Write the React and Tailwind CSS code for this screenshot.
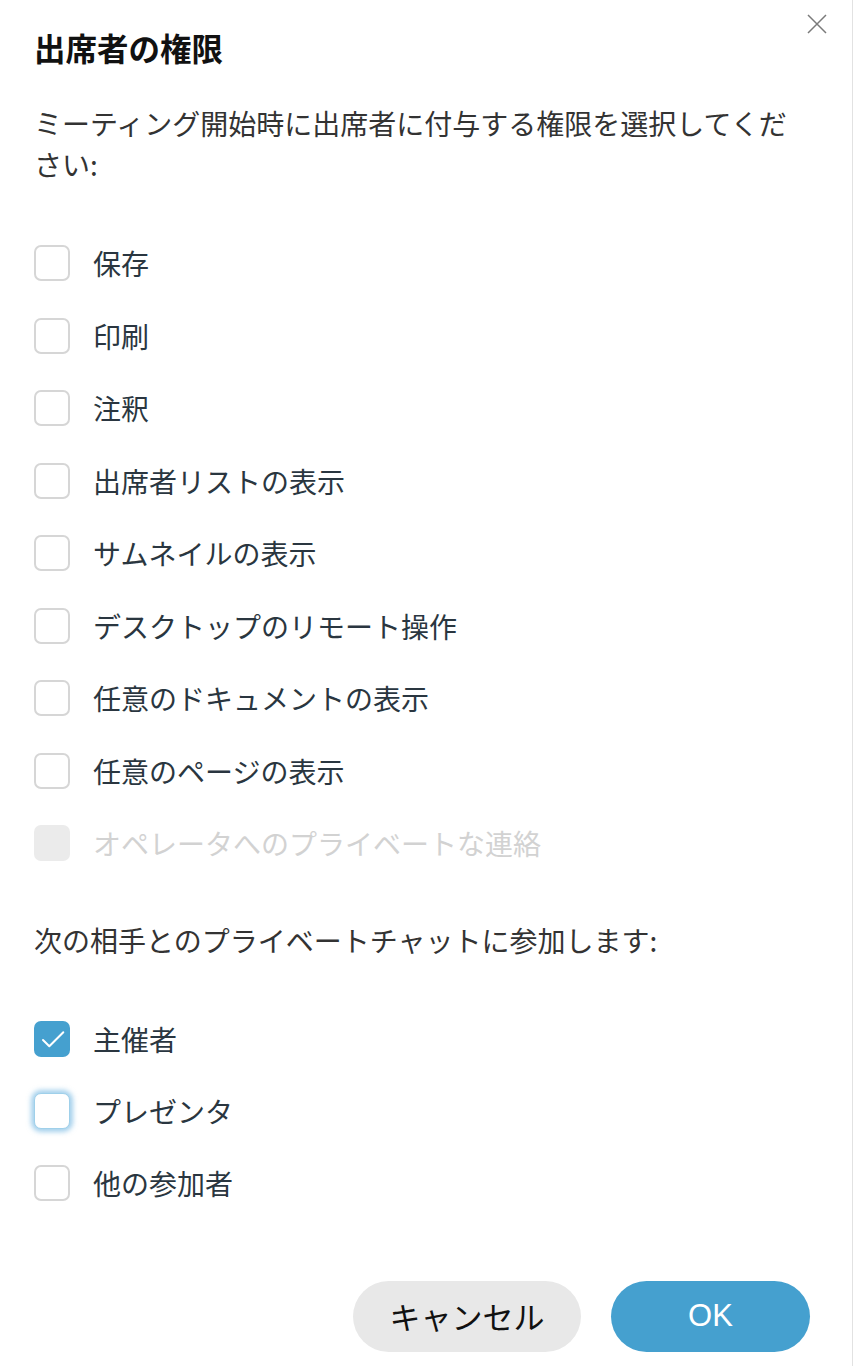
import React from 'react';

// Checkbox box in its four looks: plain, checked, focused, disabled
const Box = ({ state }) => {
  if (state === 'checked') {
    return (
      <span className="w-[36px] h-[36px] rounded-[7px] bg-[#45a0cf] flex items-center justify-center shrink-0">
        <svg viewBox="0 0 36 36" className="w-[36px] h-[36px]" fill="none" stroke="white" strokeWidth="2" strokeLinecap="round" strokeLinejoin="round">
          <path d="M9 19l6.3 6.3L29.3 11.3" />
        </svg>
      </span>
    );
  }
  if (state === 'focus') {
    return <span className="w-[36px] h-[36px] rounded-[7px] bg-white border border-[#9fd0ea] shadow-[0_0_5px_3px_rgba(90,170,220,0.55)] shrink-0" />;
  }
  if (state === 'disabled') {
    return <span className="w-[36px] h-[36px] rounded-[7px] bg-[#ebebeb] shrink-0" />;
  }
  return <span className="w-[36px] h-[36px] rounded-[7px] border-2 border-[#d6d6d6] bg-white shrink-0" />;
};

const Row = ({ label, state, h }) => (
  <div className={`flex items-center gap-[23px] ${h}`}>
    <Box state={state} />
    <span className={`text-[28px] leading-[36px] ${state === 'disabled' ? 'text-[#d2d2d2]' : 'text-[#2a3640]'}`}>{label}</span>
  </div>
);

export default function App() {
  const permissions = [
    '保存',
    '印刷',
    '注釈',
    '出席者リストの表示',
    'サムネイルの表示',
    'デスクトップのリモート操作',
    '任意のドキュメントの表示',
    '任意のページの表示',
  ];

  const chats = [
    { label: '主催者', state: 'checked' },
    { label: 'プレゼンタ', state: 'focus' },
    { label: '他の参加者', state: 'plain' },
  ];

  return (
    <div
      className="relative w-[853px] h-[1366px] bg-white border-r border-[#e2e2e2] pl-[34px] pr-[42px] pt-[28px]"
      style={{ fontFamily: '"Noto Sans CJK JP", "Noto Sans", sans-serif' }}
    >
      {/* Close */}
      <button className="absolute top-[14px] right-[25px] w-[20px] h-[20px] text-[#7a7a7a]">
        <svg viewBox="0 0 20 20" className="w-[20px] h-[20px]" fill="none" stroke="currentColor" strokeWidth="1.5">
          <path d="M1 1l18 18M19 1L1 19" />
        </svg>
      </button>

      <h1 className="text-[31.5px] leading-[38px] font-bold text-[#111]">出席者の権限</h1>

      <p className="mt-[37px] text-[28px] leading-[41px] text-[#333] w-[776px]">
        ミーティング開始時に出席者に付与する権限を選択してください:
      </p>

      <div className="mt-[42px]">
        {permissions.map((p) => (
          <Row key={p} label={p} state="plain" h="h-[72.5px]" />
        ))}
        <Row label="オペレータへのプライベートな連絡" state="disabled" h="h-[72.5px]" />
      </div>

      <p className="mt-[40px] text-[28px] leading-[41px] text-[#333]">
        次の相手とのプライベートチャットに参加します:
      </p>

      <div className="mt-[42.5px]">
        {chats.map((c) => (
          <Row key={c.label} label={c.label} state={c.state} h="h-[72px]" />
        ))}
      </div>

      <div className="mt-[62px] flex justify-end gap-[30px]">
        <button className="w-[228px] h-[71px] rounded-full bg-[#e8e8e8] text-[31px] text-[#111]">
          キャンセル
        </button>
        <button
          className="w-[199px] h-[71px] rounded-full bg-[#45a0cf] text-[31px] text-white"
          style={{ fontFamily: '"Liberation Sans", Arial, sans-serif' }}
        >
          OK
        </button>
      </div>
    </div>
  );
}
